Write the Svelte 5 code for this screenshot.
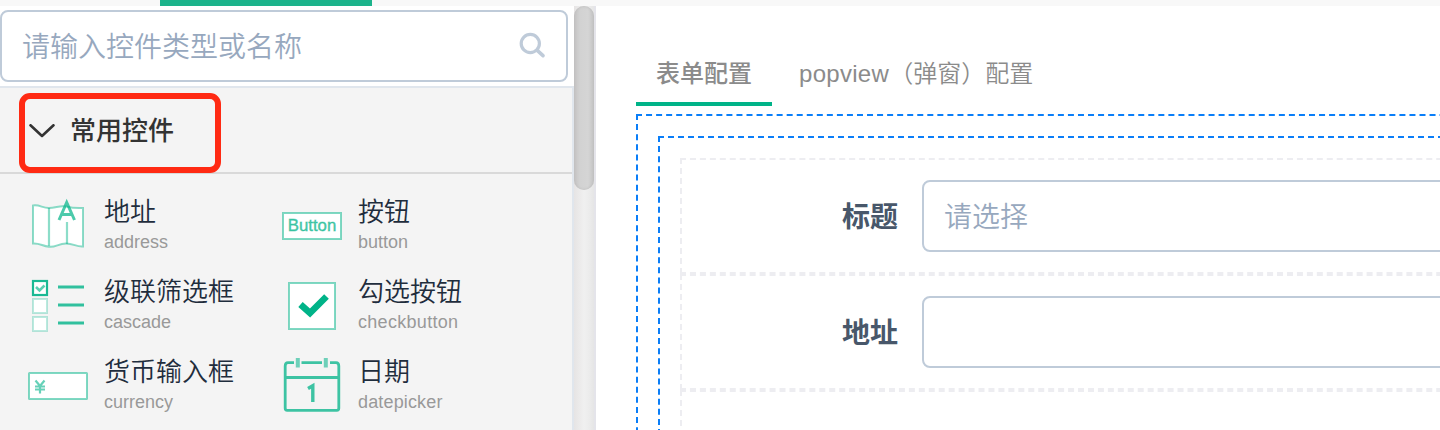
<script>
  const controls = [
    { name: '地址', type: 'address' },
    { name: '按钮', type: 'button' },
    { name: '级联筛选框', type: 'cascade' },
    { name: '勾选按钮', type: 'checkbutton', spacing: 0.3 },
    { name: '货币输入框', type: 'currency' },
    { name: '日期', type: 'datepicker', spacing: 0.15 }
  ];
  const fields = [
    { label: '标题', placeholder: '请选择' },
    { label: '地址', placeholder: '' },
    { label: '', placeholder: '' }
  ];
</script>

<div class="page">
  <div class="topbar"><div class="active-nav"></div></div>
  <div class="body">
    <aside>
      <div class="panel">
        <div class="search-wrap">
          <div class="search">
            <span>请输入控件类型或名称</span>
            <svg width="28" height="28" viewBox="0 0 28 28" fill="none" stroke="#bfcbd9" stroke-linecap="round">
              <circle cx="12.300" cy="12.500" r="9.100" stroke-width="3.200" />
              <path d="M19.500 19.700l5.500 5" stroke-width="3.600" />
            </svg>
          </div>
        </div>
        <div class="list">
          <div class="group">
            <svg width="26" height="14" viewBox="0 0 26 14" fill="none" stroke="#333" stroke-width="2.600" stroke-linecap="round" stroke-linejoin="round">
              <path d="M1.500 1.300L13 12L24.500 1.300" />
            </svg>
            <span>常用控件</span>
            <div class="mark"></div>
          </div>
          <div class="controls">
            {#each controls as c}
              <div class="control">
                <svg class="icon" width="60" height="60" viewBox="0 0 60 60" fill="none" stroke="#00b388">
                  {#if c.type === 'address'}
                    <path d="M5 9.500c7-1 9 2.500 16 2.500s11-3 17-1.500s9 2 17 1.500v38.500c-7 .5-9-3-17-3s-10 4-17 3.200s-9-3.700-16-3.200z" fill="#fff" stroke-width="2" stroke-opacity=".45" />
                    <path d="M21 12v38M39 26v22" stroke-width="2.200" stroke-opacity=".45" />
                    <path d="M31 24L38.700 6.500L46.500 24M33.500 18.500h10.500" stroke-width="3" stroke-opacity=".7" />
                  {:else if c.type === 'button'}
                    <rect x="1" y="17" width="58" height="26" fill="#fff" stroke-width="2" stroke-opacity=".5" />
                    <text x="30" y="35" text-anchor="middle" textLength="48.500" lengthAdjust="spacingAndGlyphs">Button</text>
                  {:else if c.type === 'cascade'}
                    <rect x="5" y="5" width="14" height="14" fill="#fff" stroke-width="2.200" stroke-opacity=".9" />
                    <rect x="5" y="23" width="14" height="14" fill="#fff" stroke-width="2" stroke-opacity=".27" />
                    <rect x="5" y="41" width="14" height="14" fill="#fff" stroke-width="2" stroke-opacity=".27" />
                    <path d="M8 11l3.500 3.500L16.500 9.500" stroke-width="2.600" stroke-opacity=".65" />
                    <path d="M30 11h26M30 29h26M30 47h26" stroke-width="2.800" stroke-opacity=".8" />
                  {:else if c.type === 'checkbutton'}
                    <rect x="7" y="7" width="46" height="46" fill="#fff" stroke-width="2" stroke-opacity=".5" />
                    <path d="M18.500 28.500l9.500 8.500L44.500 20.500" stroke-width="6.600" />
                  {:else if c.type === 'currency'}
                    <rect x="1" y="17" width="58" height="26" rx=".5" fill="#fff" stroke-width="2" stroke-opacity=".5" />
                    <path d="M7.500 24.500l4.500 5.500l4.500-5.500M12 30v7.500M7 30.500h10M7 33.500h10" stroke-width="2.200" stroke-opacity=".6" />
                  {:else}
                    <path d="M12 6.600H6Q3.200 6.600 3.200 10v42.300q0 2 2 2h49.600q2 0 2-2V10q0-3.400-2.800-3.400H48M19.500 6.600h20.500M4.500 21.500h51" stroke-width="2.800" stroke-opacity=".75" />
                    <path d="M15.800 2v9.500M43.800 2v9.500" stroke-width="4" stroke-opacity=".55" />
                    <path d="M26 32.500l4.800-2.800v16.300" stroke-width="3.400" stroke-opacity=".75" />
                  {/if}
                </svg>
                <div class="names">
                  <div class="name">{c.name}</div>
                  <div class="type" style:letter-spacing="{c.spacing ?? 0}px">{c.type}</div>
                </div>
              </div>
            {/each}
          </div>
        </div>
      </div>
      <div class="scrollbar"><div class="thumb"></div></div>
    </aside>
    <main>
      <div class="tabs">
        <div class="tab active">表单配置</div>
        <div class="tab"><span class="latin">popview</span>（弹窗）配置</div>
      </div>
      <div class="outer">
        <div class="inner">
          {#each fields as f}
            <div class="row">
              <div class="label">{f.label}</div>
              {#if f.label}<div class="input">{f.placeholder}</div>{/if}
            </div>
          {/each}
        </div>
      </div>
    </main>
  </div>
</div>

<style>
  .page {
    height: 430px;
    display: flex;
    flex-direction: column;
    overflow: hidden;
    background: #fff;
    font-family: "Liberation Sans", "Noto Sans CJK SC", sans-serif;
  }
  .page * { box-sizing: border-box; }
  .topbar { height: 6px; flex: none; background: #f8f8f8; padding-left: 160px; }
  .active-nav { width: 212px; height: 6px; background: #1cb38b; }
  .body { flex: 1; display: flex; min-height: 0; }
  aside { width: 596px; flex: none; display: flex; }
  .panel { width: 574px; display: flex; flex-direction: column; }
  .search-wrap { height: 80px; flex: none; padding: 4px 6px 4px 0; }
  .search {
    height: 72px;
    border: 2px solid #bfcbd9;
    border-radius: 8px;
    display: flex;
    align-items: center;
    justify-content: space-between;
    padding: 0 20px 2px 20px;
    color: #97a8be;
    font: 350 28px/40px "Noto Sans CJK SC", sans-serif;
  }
  .list { flex: 1; background: #f4f4f4; border: solid #e0e6ed; border-width: 2px 2px 0 0; }
  .group {
    position: relative;
    height: 86px;
    border-bottom: 2px solid #d9d9d9;
    display: flex;
    align-items: center;
    gap: 15px;
    padding-left: 29px;
    color: #333;
    font: 500 26px/40px "Noto Sans CJK SC", sans-serif;
  }
  .group span { padding-bottom: 2px; }
  .group svg { margin-top: 2px; }
  .mark {
    position: absolute;
    left: 19px;
    top: 5px;
    width: 202px;
    height: 80px;
    border: 6px solid #ff2a13;
    border-radius: 11px;
  }
  .controls { display: grid; grid-template-columns: 254px 254px; grid-auto-rows: 80px; padding-top: 12px; }
  .control { display: flex; gap: 16px; padding: 10px 0 0 28px; }
  .icon text { font: 16.5px "Liberation Sans", sans-serif; fill: #00b388; fill-opacity: .7; stroke: #00b388; stroke-opacity: .4; stroke-width: .8px; }
  .names { white-space: nowrap; margin-top: -1px; }
  .name { color: #1f2d3d; font: 350 26px/30px "Noto Sans CJK SC", sans-serif; }
  .type { color: #999; font-size: 18px; line-height: 30px; margin-top: 2px; }
  .scrollbar {
    width: 22px;
    border-right: 2px solid #e4e4ea;
    background: linear-gradient(90deg, #e6e4e4, #f0f0f0 50%, #ececec 75%, #e5e5e5);
  }
  .thumb {
    width: 20px;
    height: 184px;
    border-radius: 10px;
    background: linear-gradient(90deg, #c5c3c3, #d2d2d2 30%, #d5d5d5 70%, #c4c4c4);
    box-shadow: inset 0 0 3px #bbb;
  }
  main { flex: 1; min-width: 0; padding: 36px 0 0 40px; }
  .tabs { display: flex; height: 64px; }
  .tab {
    height: 64px;
    padding: 0 21px 0 20px;
    border-bottom: 4px solid transparent;
    color: #8b8b8b;
    font: 350 24px/60px "Noto Sans CJK SC", sans-serif;
    white-space: nowrap;
  }
  .tab.active { width: 136px; padding: 0 20px; border-color: #00b388; font-weight: 500; margin-right: 7px; }
  .latin { font-family: "Liberation Sans", sans-serif; letter-spacing: .3px; }
  .outer { width: 900px; height: 400px; margin-top: 8px; border: 2px dashed #0a7ef8; padding: 20px; }
  .inner { height: 390px; border: 2px dashed #0a7ef8; padding: 20px; }
  .row { height: 116px; border: 2px dashed #ededf1; padding: 20px 0; display: flex; }
  .label {
    width: 240px;
    padding-right: 24px;
    text-align: right;
    color: #48576a;
    font: 700 28px/70px "Noto Sans CJK SC", sans-serif;
  }
  .input {
    flex: 1;
    height: 72px;
    border: 2px solid #bfcbd9;
    border-radius: 8px;
    padding-left: 20px;
    color: #97a8be;
    font: 350 28px/66px "Noto Sans CJK SC", sans-serif;
  }
</style>
